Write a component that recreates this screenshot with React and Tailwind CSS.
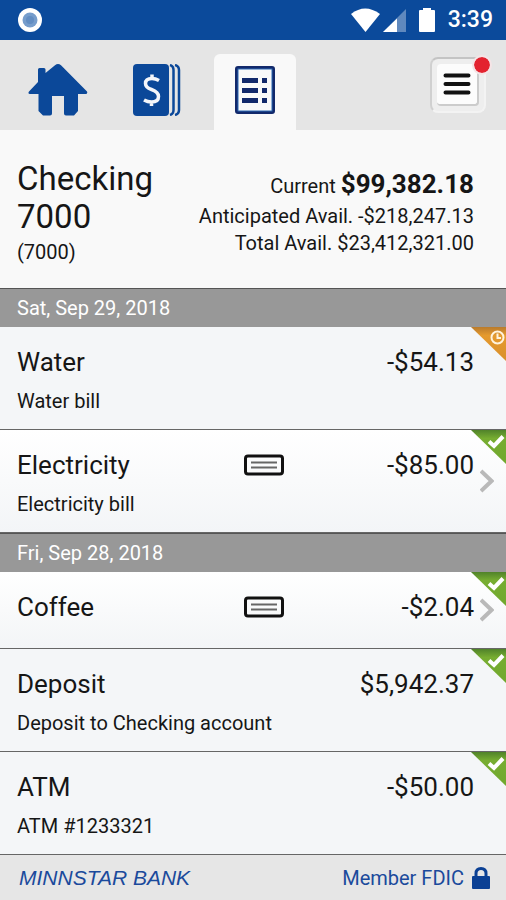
import React, { useState } from "react";

const DAYS = [
  {
    date: "Sat, Sep 29, 2018",
    items: [
      { name: "Water", note: "Water bill", amount: "-$54.13", pending: true },
      {
        name: "Electricity",
        note: "Electricity bill",
        amount: "-$85.00",
        cheque: true,
      },
    ],
  },
  {
    date: "Fri, Sep 28, 2018",
    items: [
      { name: "Coffee", amount: "-$2.04", cheque: true },
      {
        name: "Deposit",
        note: "Deposit to Checking account",
        amount: "$5,942.37",
      },
      { name: "ATM", note: "ATM #1233321", amount: "-$50.00" },
    ],
  },
];

const HomeIcon = () => (
  <svg width="60" height="52" viewBox="0 0 60 52" fill="#0b4899">
    <path d="M10 16V5.500Q10 4 11.500 4H16Q17.500 4 17.500 5.500V9L27 1.200Q30 -1 33 1.200L59 27.500Q60 30 57.500 30H50V47L46 51.500H38Q36 51.500 36 49.500V32H24V49.500Q24 51.500 22 51.500H15L10.500 47V30H2Q-0.500 30 1 27.500L10 18Z" />
  </svg>
);

const AccountsIcon = () => (
  <svg width="48" height="52" viewBox="0 0 48 52" fill="none">
    <rect x="0" y="0" width="36" height="52" rx="4" fill="#0b4899" />
    <path
      d="M37 1Q40.500 2 40.500 6V46Q40.500 50 37 51M42 1Q46 2 46 6V46Q46 50 42 51"
      stroke="#0b4899"
      strokeWidth="2.500"
    />
    <path
      d="M26 16.500Q22.500 14.500 19 14.500Q12.500 14.500 12.500 19.500Q12.500 23.500 18.500 25.500Q25.500 28 25.500 32.500Q25.500 38 18.500 38Q14.500 38 11 36M19 10.500V15M18.500 38V42"
      stroke="#f4f6fa"
      strokeWidth="3.500"
    />
  </svg>
);

const ListIcon = () => (
  <svg width="40" height="48" viewBox="0 0 40 48" fill="none">
    <rect
      x="1.500"
      y="1.500"
      width="37"
      height="45"
      rx="1.500"
      stroke="#12296b"
      strokeWidth="3"
    />
    <rect x="3" y="3" width="34" height="42" stroke="#2a68b3" />
    <path
      d="M7 14.500H23M7 24.500H23M7 34.500H23M27 14.500H32M27 24.500H32M27 34.500H32"
      stroke="#12296b"
      strokeWidth="5"
    />
  </svg>
);

const ChequeIcon = () => (
  <svg width="40" height="22" viewBox="0 0 40 22" fill="none" className="block">
    <rect
      x="1.500"
      y="2"
      width="37"
      height="18"
      rx="2.500"
      stroke="#111"
      strokeWidth="3"
    />
    <path d="M7 8.500H33M7 13.500H33" stroke="#666" strokeWidth="2" />
  </svg>
);

const Chevron = () => (
  <svg width="14" height="24" viewBox="0 0 14 24" fill="none">
    <path d="M1 2L11.500 12L1 22" stroke="#b9b9b9" strokeWidth="4" />
  </svg>
);

const CornerBadge = ({ pending }) => (
  <svg
    width="35"
    height="34"
    viewBox="0 0 35 34"
    fill="none"
    className="absolute right-0 top-0"
  >
    <defs>
      <linearGradient id="done" x1="0" y1="0" x2="0" y2="1">
        <stop offset="0" stopColor="#50822a" />
        <stop offset="0.25" stopColor="#77ad31" />
        <stop offset="1" stopColor="#71a82e" />
      </linearGradient>
      <linearGradient id="wait" x1="0" y1="0" x2="0" y2="1">
        <stop offset="0" stopColor="#b97b2d" />
        <stop offset="0.25" stopColor="#e59a2e" />
        <stop offset="1" stopColor="#d98f2b" />
      </linearGradient>
    </defs>
    <path d="M0 0H35V34Z" fill={pending ? "url(#wait)" : "url(#done)"} />
    {pending ? (
      <g stroke="#fff3dc" strokeWidth="2">
        <circle cx="26.500" cy="10.500" r="6" />
        <path d="M26.500 6.500V11H30" />
      </g>
    ) : (
      <path d="M18 11.500L23 16L32 6.500" stroke="#fff" strokeWidth="4" />
    )}
  </svg>
);

const StatusBar = () => (
  <div className="flex h-10 items-center justify-between bg-[#0b4a9b] pl-[18px] pr-[13px]">
    <svg width="24" height="24" viewBox="0 0 24 24">
      <circle cx="12" cy="12" r="12" fill="#fff" />
      <circle cx="12" cy="12" r="7.500" fill="#769dcc" />
      <circle cx="12" cy="12" r="4" fill="#628dc2" />
    </svg>
    <div className="flex items-center">
      <svg width="86" height="26" viewBox="0 0 86 26" fill="#fff">
        <path d="M1 7Q15 -4 30 7L15.500 25Z" />
        <path d="M33 25L56 2V25Z" fill="#6089be" />
        <path d="M33 25L47 11.500V25Z" />
        <path d="M70 3H73V1H81V3H84Q85 3 85 4V24Q85 25 84 25H70Q69 25 69 24V4Q69 3 70 3Z" />
      </svg>
      <span className="ml-3 text-[23px] font-medium text-white">3:39</span>
    </div>
  </div>
);

const TabBar = () => {
  const [tab, setTab] = useState("activity");
  const tabs = [
    { id: "home", label: "Home", icon: <HomeIcon />, width: "w-[84px]" },
    { id: "accounts", label: "Accounts", icon: <AccountsIcon />, width: "w-[86px]" },
    { id: "activity", label: "Activity", icon: <ListIcon />, width: "w-[82px]" },
  ];

  return (
    <nav className="flex h-[90px] items-end justify-between bg-[#e5e5e5] pl-4 pr-5">
      <div className="flex gap-[14px]">
        {tabs.map((t) => (
          <button
            key={t.id}
            type="button"
            aria-label={t.label}
            onClick={() => setTab(t.id)}
            className={`flex h-[76px] items-center justify-center rounded-t-md pb-1 ${t.width} ${
              tab === t.id ? "bg-[#f9f9f9]" : ""
            }`}
          >
            {t.icon}
          </button>
        ))}
      </div>
      <button
        type="button"
        aria-label="Menu"
        className="relative mb-[17px] flex h-14 w-14 items-center justify-center rounded-lg border-2 border-[#f3f3f3] border-t-[#c4c4c4] border-l-[#d0d0d0] bg-[#eeeeee]"
      >
        <span className="flex h-[42px] w-[42px] items-center justify-center rounded-sm border-b-2 border-r-2 border-[#cccccc] bg-[#fcfcfc]">
          <svg width="28" height="24" viewBox="0 0 28 24">
            <path
              d="M2.500 3.500H25.500M2.500 12H25.500M2.500 20.500H25.500"
              stroke="#111"
              strokeWidth="4"
              strokeLinecap="round"
            />
          </svg>
        </span>
        <span className="absolute -right-2 -top-1 h-5 w-5 rounded-full border-2 border-[#f5e4e6] bg-[#e3222f] bg-clip-padding" />
      </button>
    </nav>
  );
};

const Row = ({ item }) => {
  const Tag = item.cheque ? "a" : "div";
  return (
    <li className="border-b border-[#666666]">
      <Tag
        href={item.cheque ? "#" : undefined}
        className={`relative flex items-center pl-[17px] ${
          item.cheque ? "bg-linear-to-b from-white to-[#f3f5f7]" : "bg-[#f4f6f8]"
        }`}
      >
        <div className={`flex-1 pt-4 ${item.note ? "pb-[14px]" : "pb-[22px]"}`}>
          <div className="grid grid-cols-[1fr_40px_190px] items-center text-[26px] leading-[38px]">
            <h3>{item.name}</h3>
            <div>{item.cheque && <ChequeIcon />}</div>
            <p className="text-right">{item.amount}</p>
          </div>
          {item.note && <p className="mt-[6px] text-xl leading-7">{item.note}</p>}
        </div>
        <div className="flex w-8 justify-end pr-3">
          {item.cheque && <Chevron />}
        </div>
        <CornerBadge pending={item.pending} />
      </Tag>
    </li>
  );
};

const App = () => {
  return (
    <div className="flex min-h-screen flex-col bg-[#f9f9f9] font-['Roboto',sans-serif] text-[#161616]">
      <StatusBar />
      <TabBar />

      {/* Account summary */}
      <header className="flex justify-between pb-5 pl-[17px] pr-8 pt-[30px]">
        <div>
          <h1 className="w-36 text-[33px] leading-[38px]">Checking 7000</h1>
          <p className="text-xl leading-8">(7000)</p>
        </div>
        <div className="pt-[7px] text-right text-xl leading-[27px]">
          <p className="leading-[34px]">
            Current <strong className="text-[26px] font-bold">$99,382.18</strong>
          </p>
          <p>Anticipated Avail. -$218,247.13</p>
          <p>Total Avail. $23,412,321.00</p>
        </div>
      </header>

      {/* Transactions */}
      <main className="flex-1">
        {DAYS.map((day) => (
          <section key={day.date}>
            <h2 className="border-t border-[#555555] bg-[#989898] pl-[17px] text-xl leading-[38px] text-white">
              {day.date}
            </h2>
            <ul>
              {day.items.map((item) => (
                <Row key={item.name} item={item} />
              ))}
            </ul>
          </section>
        ))}
      </main>

      {/* Footer */}
      <footer className="flex h-[45px] items-center justify-between bg-[#e6e6e6] pl-[19px] pr-4 text-[#1b4a9c]">
        <span className="font-['Liberation_Sans',sans-serif] text-[21px] italic">
          MINNSTAR BANK
        </span>
        <a href="#" className="flex items-center gap-2 text-xl">
          Member FDIC
          <svg width="18" height="22" viewBox="0 0 18 22" fill="none">
            <rect y="9" width="18" height="13" rx="1" fill="#0b4094" />
            <path d="M4 10V6.500Q4 1.500 9 1.500T14 6.500V10" stroke="#0b4094" strokeWidth="3" />
          </svg>
        </a>
      </footer>
    </div>
  );
};

export default App;
